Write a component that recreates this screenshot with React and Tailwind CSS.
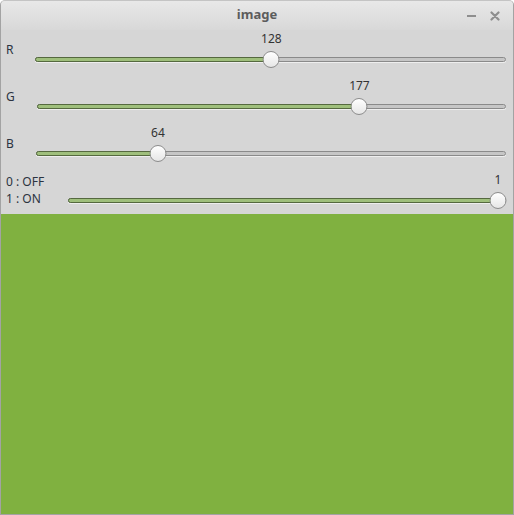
import React from 'react';

const sliders = [
  { label: 'R', value: 128, max: 255, left: 35 },
  { label: 'G', value: 177, max: 255, left: 37 },
  { label: 'B', value: 64, max: 255, left: 36 },
];

const Slider = ({ value, max }) => {
  const pct = value / max;
  // thumb travels between 8px from each end
  const pos = `calc(8px + (100% - 16px) * ${pct})`;
  return (
    <div className="relative flex-1 h-full">
      <span
        className="absolute top-[1px] -translate-x-1/2 text-[12px] leading-[16px] text-[#333]"
        style={{ left: pos }}
      >
        {value}
      </span>
      <div className="absolute top-[27px] left-0 right-0 h-[5px] rounded-full border border-[#8a8a8a] bg-[#c6c6c6] shadow-[0_1px_0_#eeeeee]" />
      <div
        className="absolute top-[27px] left-0 h-[5px] rounded-l-full border border-[#55693f] bg-[#9fbf7c]"
        style={{ width: pos }}
      />
      <div
        className="absolute top-[21px] w-[17px] h-[17px] -translate-x-1/2 rounded-full border border-[#8c8c8c] bg-gradient-to-b from-white to-[#e6e6e6]"
        style={{ left: pos }}
      />
    </div>
  );
};

export default function App() {
  return (
    <div
      className="w-[514px] h-[515px] flex flex-col bg-[#d6d6d6] border border-[#a3a3a3] border-t-[#c4c4c4] rounded-t-[5px] overflow-hidden"
      style={{ fontFamily: '"Noto Sans", "Open Sans", sans-serif' }}
    >
      {/* title bar */}
      <div className="h-[29px] shrink-0 relative flex items-center justify-center bg-gradient-to-b from-[#e8e8e8] to-[#d8d8d8]">
        <span className="text-[13px] font-bold text-[#5c5c5c] -mt-[1px]">image</span>
        <div className="absolute right-[13px] top-0 h-full flex items-center gap-[14px]">
          <div className="w-[9px] h-[2px] bg-[#8e8e8e]" />
          <svg width="10" height="10" viewBox="0 0 10 10">
            <path d="M1.5 1.5 L8.5 8.5 M8.5 1.5 L1.5 8.5" stroke="#8e8e8e" strokeWidth="2.2" strokeLinecap="round" />
          </svg>
        </div>
      </div>

      {/* controls */}
      <div className="flex flex-col shrink-0">
        {sliders.map((s) => (
          <div key={s.label} className="h-[47px] flex pr-[7px]">
            <div className="pl-[5px] pt-[11px] text-[12px] leading-[18px] text-[#2b3340]" style={{ width: s.left - 1 }}>
              {s.label}
            </div>
            <Slider value={s.value} max={s.max} />
          </div>
        ))}
        <div className="h-[43px] flex pr-[7px]">
          <div className="w-[67px] pl-[5px] pt-[2px] text-[12px] leading-[17px] text-[#2b3340]">
            <div>0 : OFF</div>
            <div>1 : ON</div>
          </div>
          <Slider value={1} max={1} />
        </div>
      </div>

      <div className="flex-1 bg-[#80b140]" />
    </div>
  );
}
